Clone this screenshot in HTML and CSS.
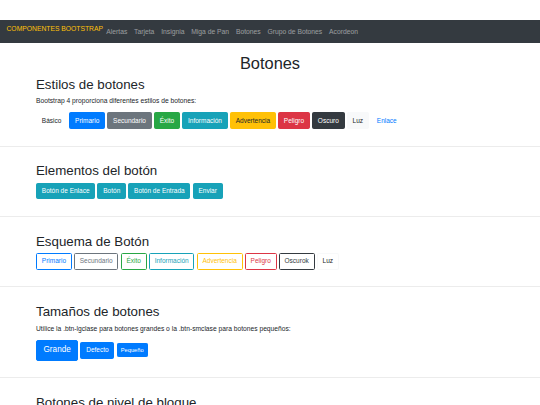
FILE: index.html
```html
<!DOCTYPE html>
<html lang="es">
<head>
<meta charset="utf-8">
<title>Botones</title>
<link rel="stylesheet" href="styles.css">
</head>
<body>
<nav class="navbar">
  <a class="brand" href="#">COMPONENTES BOOTSTRAP</a>
  <ul class="nav">
    <li><a href="#">Alertas</a></li>
    <li><a href="#">Tarjeta</a></li>
    <li><a href="#">Insignia</a></li>
    <li><a href="#">Miga de Pan</a></li>
    <li><a href="#">Botones</a></li>
    <li><a href="#">Grupo de Botones</a></li>
    <li><a href="#">Acordeon</a></li>
  </ul>
</nav>

<section class="sec sec-first">
  <div class="container">
    <h1 class="title">Botones</h1>
    <h2>Estilos de botones</h2>
    <p>Bootstrap 4 proporciona diferentes estilos de botones:</p>
    <div class="btns">
      <button class="btn">Básico</button>
      <button class="btn btn-primary">Primario</button>
      <button class="btn btn-secondary">Secundario</button>
      <button class="btn btn-success">Éxito</button>
      <button class="btn btn-info">Información</button>
      <button class="btn btn-warning">Advertencia</button>
      <button class="btn btn-danger">Peligro</button>
      <button class="btn btn-dark">Oscuro</button>
      <button class="btn btn-light">Luz</button>
      <button class="btn btn-link">Enlace</button>
    </div>
  </div>
</section>

<section class="sec">
  <div class="container">
    <h2>Elementos del botón</h2>
    <div class="btns">
      <a class="btn btn-info" href="#">Botón de Enlace</a>
      <button class="btn btn-info">Botón</button>
      <input class="btn btn-info" type="button" value="Botón de Entrada">
      <input class="btn btn-info" type="submit" value="Enviar">
    </div>
  </div>
</section>

<section class="sec">
  <div class="container">
    <h2>Esquema de Botón</h2>
    <div class="btns">
      <button class="btn ol-primary">Primario</button>
      <button class="btn ol-secondary">Secundario</button>
      <button class="btn ol-success">Éxito</button>
      <button class="btn ol-info">Información</button>
      <button class="btn ol-warning">Advertencia</button>
      <button class="btn ol-danger">Peligro</button>
      <button class="btn ol-dark">Oscurok</button>
      <button class="btn ol-light">Luz</button>
    </div>
  </div>
</section>

<section class="sec">
  <div class="container">
    <h2>Tamaños de botones</h2>
    <p>Utilice la .btn-lgclase para botones grandes o la .btn-smclase para botones pequeños:</p>
    <div class="btns btns-sizes">
      <button class="btn btn-primary btn-lg">Grande</button>
      <button class="btn btn-primary">Defecto</button>
      <button class="btn btn-primary btn-sm">Pequeño</button>
    </div>
  </div>
</section>

<section class="sec">
  <div class="container">
    <h2>Botones de nivel de bloque</h2>
    <button class="btn btn-primary btn-block">Botón de ancho completo</button>
    <button class="btn btn-secondary btn-block">Botón de ancho completo</button>
  </div>
</section>
</body>
</html>
```

FILE: styles.css
```css
* { box-sizing: border-box; }

html, body {
  margin: 0;
  padding: 0;
}

body {
  padding-top: 20px;
  font-family: "Liberation Sans", Arial, Helvetica, sans-serif;
  font-size: 6.7px;
  line-height: 1.46;
  color: #212529;
  background: #fff;
}

/* Navbar */
.navbar {
  display: flex;
  align-items: center;
  height: 23.4px;
  padding: 0 6.5px;
  background: #343a40;
}

.brand {
  color: #ffc107;
  font-size: 6.75px;
  text-decoration: none;
  padding-bottom: 6px;
  white-space: nowrap;
}

.nav {
  display: flex;
  list-style: none;
  margin: 0;
  padding: 0;
}

.nav a {
  display: block;
  padding: 0 3.4px;
  color: rgba(255, 255, 255, 0.5);
  text-decoration: none;
  font-size: 6.75px;
  white-space: nowrap;
}

/* Layout */
.container {
  width: 468px;
  margin: 0 auto;
}

.sec {
  padding: 16.8px 0 16.8px;
  border-bottom: 1px solid #ececec;
}

.sec-first {
  padding-top: 10.2px;
}

.title {
  margin: 0 0 3.3px;
  text-align: center;
  font-size: 16.4px;
  font-weight: 400;
  line-height: 1.2;
}

h2 {
  margin: 0 0 3.3px;
  font-size: 13.3px;
  font-weight: 400;
  line-height: 1.2;
}

p {
  margin: 0 0 6.5px;
}

/* Buttons */
.btns {
  display: flex;
  flex-wrap: wrap;
  gap: 2.2px;
  align-items: flex-start;
}

.btns-sizes {
  align-items: center;
  gap: 2.1px;
}

.btn {
  display: inline-block;
  margin: 0;
  padding: 2.45px 4.8px;
  font-family: inherit;
  font-size: 6.5px;
  line-height: 1.5;
  font-weight: 400;
  text-align: center;
  text-decoration: none;
  border: 0.41px solid transparent;
  border-radius: 1.6px;
  background: transparent;
  color: #212529;
  white-space: nowrap;
  cursor: pointer;
}

.btn-primary { background: #007bff; border-color: #007bff; color: #fff; }
.btn-secondary { background: #6c757d; border-color: #6c757d; color: #fff; }
.btn-success { background: #28a745; border-color: #28a745; color: #fff; }
.btn-info { background: #17a2b8; border-color: #17a2b8; color: #fff; }
.btn-warning { background: #ffc107; border-color: #ffc107; color: #212529; }
.btn-danger { background: #dc3545; border-color: #dc3545; color: #fff; }
.btn-dark { background: #343a40; border-color: #343a40; color: #fff; }
.btn-light { background: #f8f9fa; border-color: #f8f9fa; color: #212529; }
.btn-link { color: #007bff; }

.ol-primary { border-color: #007bff; color: #007bff; }
.ol-secondary { border-color: #6c757d; color: #6c757d; }
.ol-success { border-color: #28a745; color: #28a745; }
.ol-info { border-color: #17a2b8; color: #17a2b8; }
.ol-warning { border-color: #ffc107; color: #ffc107; }
.ol-danger { border-color: #dc3545; color: #dc3545; }
.ol-dark { border-color: #343a40; color: #343a40; }
.ol-light { border-color: #f8f9fa; color: #212529; }

.btn-lg {
  padding: 3.3px 6.5px;
  font-size: 8.2px;
  border-radius: 2px;
}

.btn-sm {
  padding: 1.6px 3.3px;
  font-size: 5.7px;
  border-radius: 1.3px;
}

.btn-block {
  display: block;
  width: 100%;
  margin-bottom: 3.3px;
}
```
